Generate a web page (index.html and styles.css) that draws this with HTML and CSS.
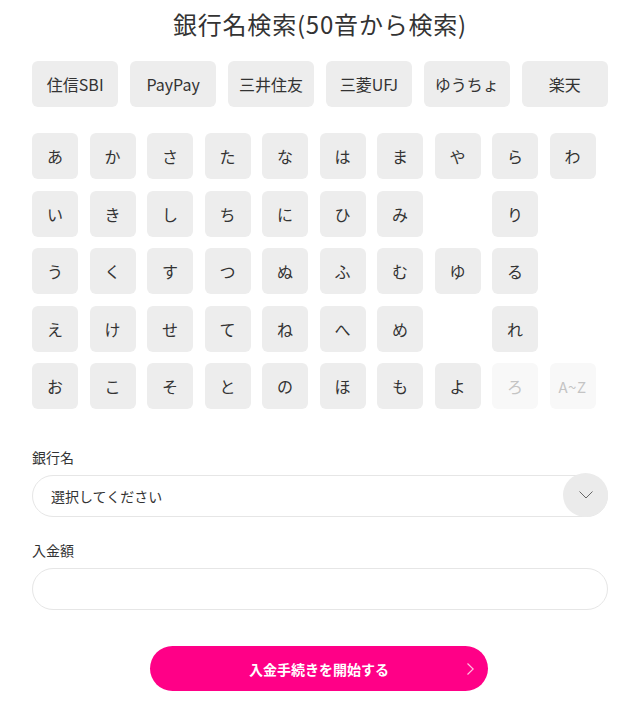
FILE: index.html
```html
<!DOCTYPE html>
<html lang="ja">
<head>
<meta charset="utf-8">
<title>銀行名検索</title>
<link rel="stylesheet" href="styles.css">
</head>
<body>
<div class="page">
  <h1 class="title">銀行名検索(50音から検索)</h1>

  <div class="banks">
    <button class="chip">住信SBI</button>
    <button class="chip">PayPay</button>
    <button class="chip">三井住友</button>
    <button class="chip">三菱UFJ</button>
    <button class="chip">ゆうちょ</button>
    <button class="chip">楽天</button>
  </div>

  <div class="kana">
    <button class="key">あ</button><button class="key">か</button><button class="key">さ</button><button class="key">た</button><button class="key">な</button><button class="key">は</button><button class="key">ま</button><button class="key">や</button><button class="key">ら</button><button class="key">わ</button>
    <button class="key">い</button><button class="key">き</button><button class="key">し</button><button class="key">ち</button><button class="key">に</button><button class="key">ひ</button><button class="key">み</button><span class="blank"></span><button class="key">り</button><span class="blank"></span>
    <button class="key">う</button><button class="key">く</button><button class="key">す</button><button class="key">つ</button><button class="key">ぬ</button><button class="key">ふ</button><button class="key">む</button><button class="key">ゆ</button><button class="key">る</button><span class="blank"></span>
    <button class="key">え</button><button class="key">け</button><button class="key">せ</button><button class="key">て</button><button class="key">ね</button><button class="key">へ</button><button class="key">め</button><span class="blank"></span><button class="key">れ</button><span class="blank"></span>
    <button class="key">お</button><button class="key">こ</button><button class="key">そ</button><button class="key">と</button><button class="key">の</button><button class="key">ほ</button><button class="key">も</button><button class="key">よ</button><button class="key disabled">ろ</button><button class="key disabled az">A~Z</button>
  </div>

  <label class="label label-bank">銀行名</label>
  <div class="select">
    <span class="select-text">選択してください</span>
    <span class="select-arrow">
      <svg width="14" height="8" viewBox="0 0 14 8"><path d="M0.5 0.5 L7 7 L13.5 0.5" fill="none" stroke="#666" stroke-width="1"/></svg>
    </span>
  </div>

  <label class="label label-amount">入金額</label>
  <div class="input"></div>

  <button class="submit">入金手続きを開始する
    <svg class="submit-arrow" width="7" height="12" viewBox="0 0 7 12"><path d="M0.5 0.5 L6.2 6 L0.5 11.5" fill="none" stroke="rgba(255,255,255,0.75)" stroke-width="1.2"/></svg>
  </button>
</div>
</body>
</html>
```

FILE: styles.css
```css
* { box-sizing: border-box; }
body {
  margin: 0;
  background: #fff;
  color: #333;
  font-family: "Noto Sans CJK JP", "Noto Sans", sans-serif;
}
.page {
  padding: 6px 36px 0 32px;
}
.title {
  margin: 0;
  font-size: 24px;
  font-weight: 400;
  letter-spacing: 0.8px;
  line-height: 35px;
  text-align: center;
  color: #333;
}
.banks {
  margin-top: 20px;
  display: grid;
  grid-template-columns: repeat(6, 1fr);
  column-gap: 11.5px;
}
.chip, .key {
  border: 0;
  background: #ededed;
  border-radius: 6px;
  color: #333;
  font-family: inherit;
  padding: 0;
}
.chip {
  height: 46px;
  font-size: 16px;
}
.kana {
  margin-top: 26px;
  display: grid;
  grid-template-columns: repeat(10, 46px);
  grid-auto-rows: 46px;
  column-gap: 11.5px;
  row-gap: 11.6px;
}
.key {
  font-size: 16px;
}
.key.disabled {
  background: #f8f8f8;
  color: #c4c4c4;
}
.key.az {
  font-size: 15px;
  letter-spacing: 0.5px;
}
.label {
  display: block;
  font-size: 14px;
  line-height: 20px;
  color: #333;
}
.label-bank { margin-top: 38px; }
.label-amount { margin-top: 23px; }
.select, .input {
  margin-top: 8px;
  height: 42px;
  border: 1px solid #e6e6e6;
  border-radius: 21px;
  background: #fff;
}
.select {
  position: relative;
  display: flex;
  align-items: center;
  padding-left: 18px;
}
.select-text {
  font-size: 14px;
  color: #333;
}
.select-arrow {
  position: absolute;
  right: -1px;
  bottom: -1px;
  width: 45px;
  height: 44px;
  border-radius: 50%;
  background: #ebebeb;
  display: flex;
  align-items: center;
  justify-content: center;
}
.submit {
  position: relative;
  display: block;
  margin: 36px auto 0;
  width: 338px;
  height: 45px;
  border: 0;
  border-radius: 23px;
  background: #ff0087;
  color: #fff;
  font-family: inherit;
  font-size: 14px;
  font-weight: 700;
  padding: 0;
  transform: translateX(-1px);
}
.submit-arrow {
  position: absolute;
  right: 14px;
  top: 17px;
}
```
